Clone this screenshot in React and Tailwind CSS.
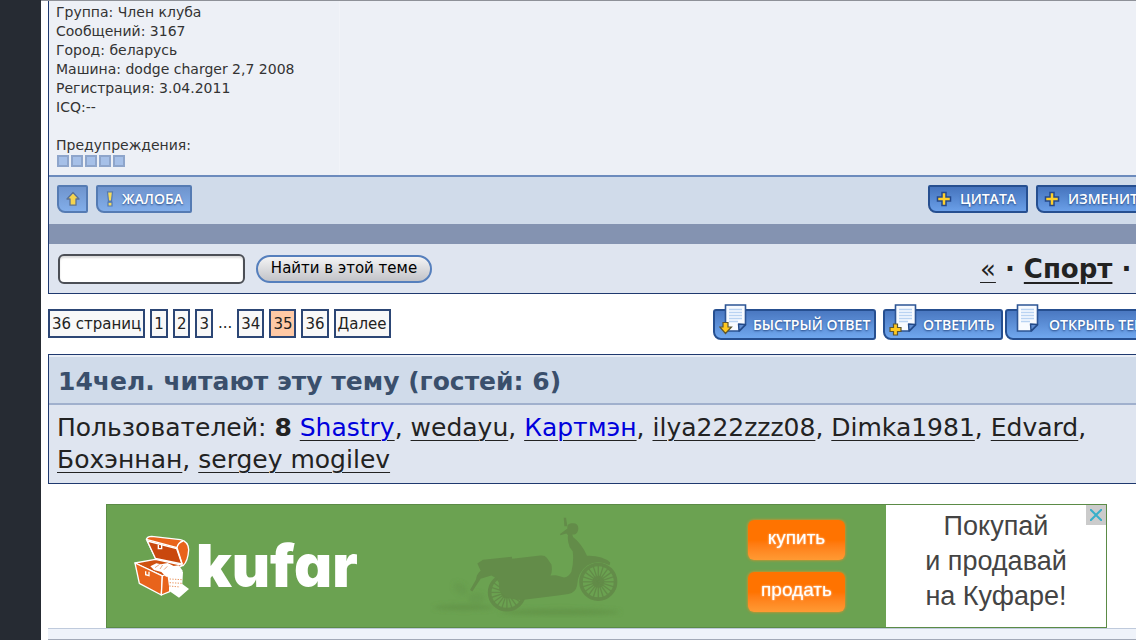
import React from "react";

const profile = [
  "Группа: Член клуба",
  "Сообщений: 3167",
  "Город: беларусь",
  "Машина: dodge charger 2,7 2008",
  "Регистрация: 3.04.2011",
  "ICQ:--",
];

const readers = [
  { name: "Shastry", blue: true },
  { name: "wedayu" },
  { name: "Картмэн", blue: true },
  { name: "ilya222zzz08" },
  { name: "Dimka1981" },
  { name: "Edvard" },
  { name: "Бохэннан" },
  { name: "sergey mogilev" },
];

function Plus() {
  return (
    <svg className="size-4 shrink-0" viewBox="0 0 16 16" aria-hidden="true">
      <path d="M6 1.500h4V6h4.500v4H10v4.500H6V10H1.500V6H6z" fill="#ffd02a" stroke="#24488c" strokeWidth="1.500" />
    </svg>
  );
}

function Exclaim() {
  return (
    <svg className="h-4 w-2 shrink-0" viewBox="0 0 8 16" aria-hidden="true">
      <path d="M1.500 .8h5l-1 9.200h-3zM2 11.200h4v3.800h-4z" fill="#f7dc5c" stroke="#5379b2" strokeWidth="1.200" />
    </svg>
  );
}

function UpArrow() {
  return (
    <svg className="size-4" viewBox="0 0 16 16" aria-hidden="true">
      <path d="M8 1.500 14 8h-3v6.200H5V8H2z" fill="#f5d44e" stroke="#5b7194" strokeWidth="1.300" strokeLinejoin="round" />
    </svg>
  );
}

function Sheet({ mark }) {
  return (
    <svg className="h-[34px] w-8 shrink-0" viewBox="0 0 32 34" aria-hidden="true">
      <path d="M6.500 1h20v20l-6 6h-14z" fill="#f8fbff" stroke="#2d5595" strokeWidth="1.600" />
      <path d="M10 5.500h13M10 8.500h13M10 11.500h13M10 14.500h13M10 17.500h9" stroke="#b9d3f2" strokeWidth="1.400" />
      <path d="M26.500 20.500 20 27l-.5-7z" fill="#5f8cd0" stroke="#224a89" strokeWidth="1.400" strokeLinejoin="round" />
      {mark === "down" && (
        <path d="M4 18.500h5V23h3.500l-6 6.500L.8 23H4z" fill="#ffc91f" stroke="#5d5632" strokeWidth="1.200" />
      )}
      {mark === "plus" && (
        <path d="M4.500 20h4v3.500H12v4H8.500V31h-4v-3.500H1v-4h3.500z" fill="#ffc91f" stroke="#5d5632" strokeWidth="1.200" />
      )}
    </svg>
  );
}

const label =
  "font-['Open_Sans','Noto_Sans',sans-serif] text-sm font-semibold text-white whitespace-nowrap [text-shadow:0_1px_2px_#264a85]";

function PostButton({ children, faded, className }) {
  return (
    <button
      type="button"
      className={
        (faded
          ? "border-[#557bb3] from-[#6f94cd] to-[#82aeea] "
          : "border-[#264f90] from-[#4674bd] to-[#6a9fe8] ") +
        "flex h-7 shrink-0 items-center rounded-[2px] rounded-bl-lg border-2 bg-linear-to-b " +
        label +
        " " +
        className
      }
    >
      {children}
    </button>
  );
}

function TopicButton({ children, mark, className }) {
  return (
    <button
      type="button"
      className={
        "flex h-[31px] shrink-0 items-center rounded-[3px] rounded-bl-lg border-2 border-[#264f90] bg-linear-to-b from-[#4a78c1] to-[#70a7ee] " +
        label +
        " " +
        className
      }
    >
      <span className="-mt-2">
        <Sheet mark={mark} />
      </span>
      {children}
    </button>
  );
}

function Page({ children, current }) {
  return (
    <a
      href="#page"
      className={
        (current ? "bg-[#ffc9a5] " : "bg-[#f8f8f8] ") +
        "flex h-[29px] items-center border-2 border-[#2c4675] px-0.5 pt-0.5"
      }
    >
      {children}
    </a>
  );
}

function Chest() {
  return (
    <svg className="h-[65px] w-[60px] shrink-0" viewBox="125 115 180 195" aria-hidden="true">
      <g stroke="#fff" strokeWidth="4" strokeLinejoin="round">
        <path d="M168 131q3-9 16-9l86 10q24 5 25 30-2 35-17 48l-82-21z" fill="#e8631b" />
        <path d="m171 136 88 23 16 46-80-17z" fill="#c9480e" />
        <path d="m168 131 92 25q3-15 18-20M260 156l16 50" fill="none" />
        <path d="m134 202 61-11 82 18-59 32z" fill="#cf5110" />
        <path d="m134 202 82 39-3 57-66-35z" fill="#e8631b" />
        <path d="m216 241 22-11v58l-25 10z" fill="#e8631b" />
      </g>
      <path d="m180 212 18-9 14 3 20-4 18 9 15-2 12 16-5 20-45-2-14-14-22-6z" fill="#fff" />
      <path d="m194 216 14-10M209 220l8-12M221 222l10-10" stroke="#dc7a3f" strokeWidth="2" />
      <path d="M230 229q30-12 48 0l-2 36 20 15-30 26-28-19z" fill="#fff" />
      <path d="m238 250 36 2m-36 9 36 2m-37 8 32 3" stroke="#e8955f" strokeWidth="3" strokeDasharray="4 4" />
      <path d="M204 147v12h10v-11M166 227v10l10 3v-12" fill="none" stroke="#fff" strokeWidth="4" />
    </svg>
  );
}

function Wheel({ cx, cy, r }) {
  const spokes = Array.from({ length: 20 }, (_, i) => (i * Math.PI) / 10);
  return (
    <g>
      <circle cx={cx} cy={cy} r={r} fill="none" stroke="#638c49" strokeWidth="11" />
      <circle cx={cx} cy={cy} r="18" fill="#638c49" />
      {spokes.map((a) => (
        <line
          key={a}
          x1={cx}
          y1={cy}
          x2={cx + r * Math.cos(a)}
          y2={cy + r * Math.sin(a)}
          stroke="#638c49"
          strokeWidth="4"
        />
      ))}
    </g>
  );
}

function Scooter() {
  return (
    <svg className="h-[103px] w-[197px] shrink-0" viewBox="30 75 590 310" aria-hidden="true">
      <defs>
        <filter id="soft" x="-20%" y="-100%" width="140%" height="300%">
          <feGaussianBlur stdDeviation="6" />
        </filter>
      </defs>
      <g fill="#639549" filter="url(#soft)">
        <ellipse cx="420" cy="367" rx="180" ry="9" />
        <ellipse cx="130" cy="353" rx="90" ry="8" />
        <ellipse cx="120" cy="297" rx="24" ry="15" opacity=".5" transform="rotate(40 120 297)" />
        <ellipse cx="168" cy="325" rx="26" ry="16" opacity=".5" />
      </g>
      <Wheel cx={260} cy={308} r={52} />
      <Wheel cx={535} cy={276} r={52} />
      <g fill="#638c49">
        <path d="M188 210l87-9 1 6 84-10q14-2 20 7l14 20q4 22-3 33l16-1 25 7q14-1 22-17 8-30 4-62l-9-12q-8-22-5-36l-5-5-18 5-1-4 22-16q-2-14 12-16 20-3 21 14 0 16-12 20h-6l2 7q28 22 42 57 45-2 70 20l-2 8q-36-18-66 0-30 20-32 62-4 20-26 25l-140 18q-52 0-68-30l-2-32-22-12-32 10-25 38-7-4 18-32q2-16 14-26l-10-22z" />
        <path d="M431 83h7l4 26h-9z" />
      </g>
    </svg>
  );
}

function AdButton({ children }) {
  return (
    <button
      type="button"
      className="h-10 w-[97px] rounded-md bg-linear-to-b from-[#ff7300] from-50% to-[#ff9a33] pb-1 font-['Liberation_Sans',sans-serif] text-[19px] text-white shadow-[0_0_3px_#ff8a1c] [text-shadow:0_0_2px_#fff]"
    >
      {children}
    </button>
  );
}

export default function App() {
  return (
    <div className="flex h-screen overflow-hidden bg-white font-['DejaVu_Sans',Verdana,sans-serif] text-[#222]">
      <aside className="w-[41px] shrink-0 bg-[#262b33]" />
      <main className="flex min-w-0 flex-1 flex-col overflow-hidden border-t border-[#8e9198]">
        <section className="ml-[7px] border-b border-l border-b-[#1f396f] border-l-[#1f396f]">
          <div className="flex border-b-2 border-[#6c8bbd] bg-[#edf0f6]">
            <div className="w-[291px] border-r border-[#f1f3f8] pt-0.5 pb-2 pl-[7px] text-sm leading-[19px] text-[#333]">
              {profile.map((line) => (
                <p key={line} className="whitespace-nowrap">{line}</p>
              ))}
              <p className="mt-[19px]">Предупреждения:</p>
              <div className="flex gap-0.5 pl-px">
                {[0, 1, 2, 3, 4].map((n) => (
                  <span key={n} className="size-3 border-2 border-[#8ea5cb] bg-[#a6c0e8]" />
                ))}
              </div>
            </div>
          </div>
          <div className="flex h-[47px] justify-between bg-[#d0dbea] pt-2">
            <div className="flex gap-2 pl-2">
              <PostButton faded className="w-[31px] justify-center">
                <UpArrow />
              </PostButton>
              <PostButton faded className="w-24 gap-2 pl-2">
                <Exclaim />
                ЖАЛОБА
              </PostButton>
            </div>
            <div className="flex w-[208px] shrink-0 gap-2">
              <PostButton className="w-[100px] gap-2 pl-1.5">
                <Plus />
                ЦИТАТА
              </PostButton>
              <PostButton className="w-[118px] gap-2 pl-1.5">
                <Plus />
                ИЗМЕНИТЬ
              </PostButton>
            </div>
          </div>
          <div className="h-5 bg-[#8493b1]" />
          <div className="flex h-[49px] items-center justify-between bg-[#dfe5f0]">
            <form className="flex items-center gap-[11px] pl-[9px]">
              <input
                type="text"
                aria-label="Найти в этой теме"
                className="h-[30px] w-[187px] rounded-md border-2 border-[#4c4f56] bg-white px-2 text-sm shadow-[inset_0_2px_2px_#ddd]"
              />
              <button
                type="button"
                className="h-7 w-[176px] rounded-full border-2 border-[#557fbd] bg-linear-to-b from-[#f4f4f5] to-[#c2c3c8] text-[15px] text-black"
              >
                Найти в этой теме
              </button>
            </form>
            <nav className="flex w-[156px] shrink-0 gap-[9px] text-[26px] leading-8 font-bold">
              <a href="#prev" className="font-normal underline decoration-1 underline-offset-4">«</a>
              <span>·</span>
              <a href="#sport" className="underline decoration-2 underline-offset-4">Спорт</a>
              <span>·</span>
            </nav>
          </div>
        </section>

        <div className="flex h-[61px] justify-between pl-[7px]">
          <nav className="flex gap-[5px] pt-[15px] text-[15px]">
            <Page>36 страниц</Page>
            <Page>1</Page>
            <Page>2</Page>
            <Page>3</Page>
            <span className="flex h-[29px] items-center">...</span>
            <Page>34</Page>
            <Page current>35</Page>
            <Page>36</Page>
            <Page>Далее</Page>
          </nav>
          <div className="flex w-[423px] shrink-0 pt-[15px]">
            <TopicButton mark="down" className="mr-[7px] w-[163px] gap-0.5 pl-1">
              БЫСТРЫЙ ОТВЕТ
            </TopicButton>
            <TopicButton mark="plus" className="mr-0.5 w-[120px] gap-0.5 pl-1">
              ОТВЕТИТЬ
            </TopicButton>
            <TopicButton className="w-[160px] gap-1.5 pl-1">ОТКРЫТЬ ТЕМУ</TopicButton>
          </div>
        </div>

        <section className="ml-[7px] border border-r-0 border-[#1f396f] bg-[#dfe5f0]">
          <h2 className="border-t-2 border-b-2 border-t-[#e9eef6] border-b-[#a0b0cd] bg-[#d0dbea] pt-[9px] pb-1.5 pl-[9px] text-[25px] leading-[31px] font-bold text-[#3a4f6c]">
            14чел. читают эту тему (гостей: 6)
          </h2>
          <p className="py-[7px] pr-4 pl-2 text-[25px] leading-8">
            Пользователей: <b>8</b>{" "}
            {readers.map((r, i) => (
              <React.Fragment key={r.name}>
                {i > 0 && ", "}
                <a
                  href="#user"
                  className={(r.blue ? "text-[#0000dd] " : "") + "underline decoration-[#222] decoration-1 underline-offset-4"}
                >
                  {r.name}
                </a>
              </React.Fragment>
            ))}
          </p>
        </section>

        <section className="mt-5 mr-[29px] ml-[65px] flex h-[124px] shrink-0 border border-[#5b8b46] bg-[#6ba251]">
          <div className="flex flex-1 items-center justify-between pr-[41px] pl-[25px]">
            <div className="flex items-center gap-1">
              <Chest />
              <span className="font-['Inter',sans-serif] text-[59px] leading-[62px] font-black text-white [font-feature-settings:'cv11']">
                kufar
              </span>
            </div>
            <Scooter />
            <div className="ml-12 flex flex-col gap-3">
              <AdButton>купить</AdButton>
              <AdButton>продать</AdButton>
            </div>
          </div>
          <div className="relative w-[220px] bg-white pt-1 text-center font-['Liberation_Sans',sans-serif] text-[27px] leading-[35px] text-[#444]">
            <p>Покупай</p>
            <p>и продавай</p>
            <p>на Куфаре!</p>
            <button type="button" aria-label="Закрыть" className="absolute top-0 right-0 bg-[#cbcbcb] p-1">
              <svg className="size-3" viewBox="0 0 12 12" aria-hidden="true">
                <path d="m0 0 12 12M12 0 0 12" stroke="#37afca" strokeWidth="2" />
              </svg>
            </button>
          </div>
        </section>
        <div className="h-3 shrink-0 border-y border-t-[#bfcadc] border-b-[#a3aab8] bg-[#eff3fa] ml-[7px]" />
      </main>
    </div>
  );
}
